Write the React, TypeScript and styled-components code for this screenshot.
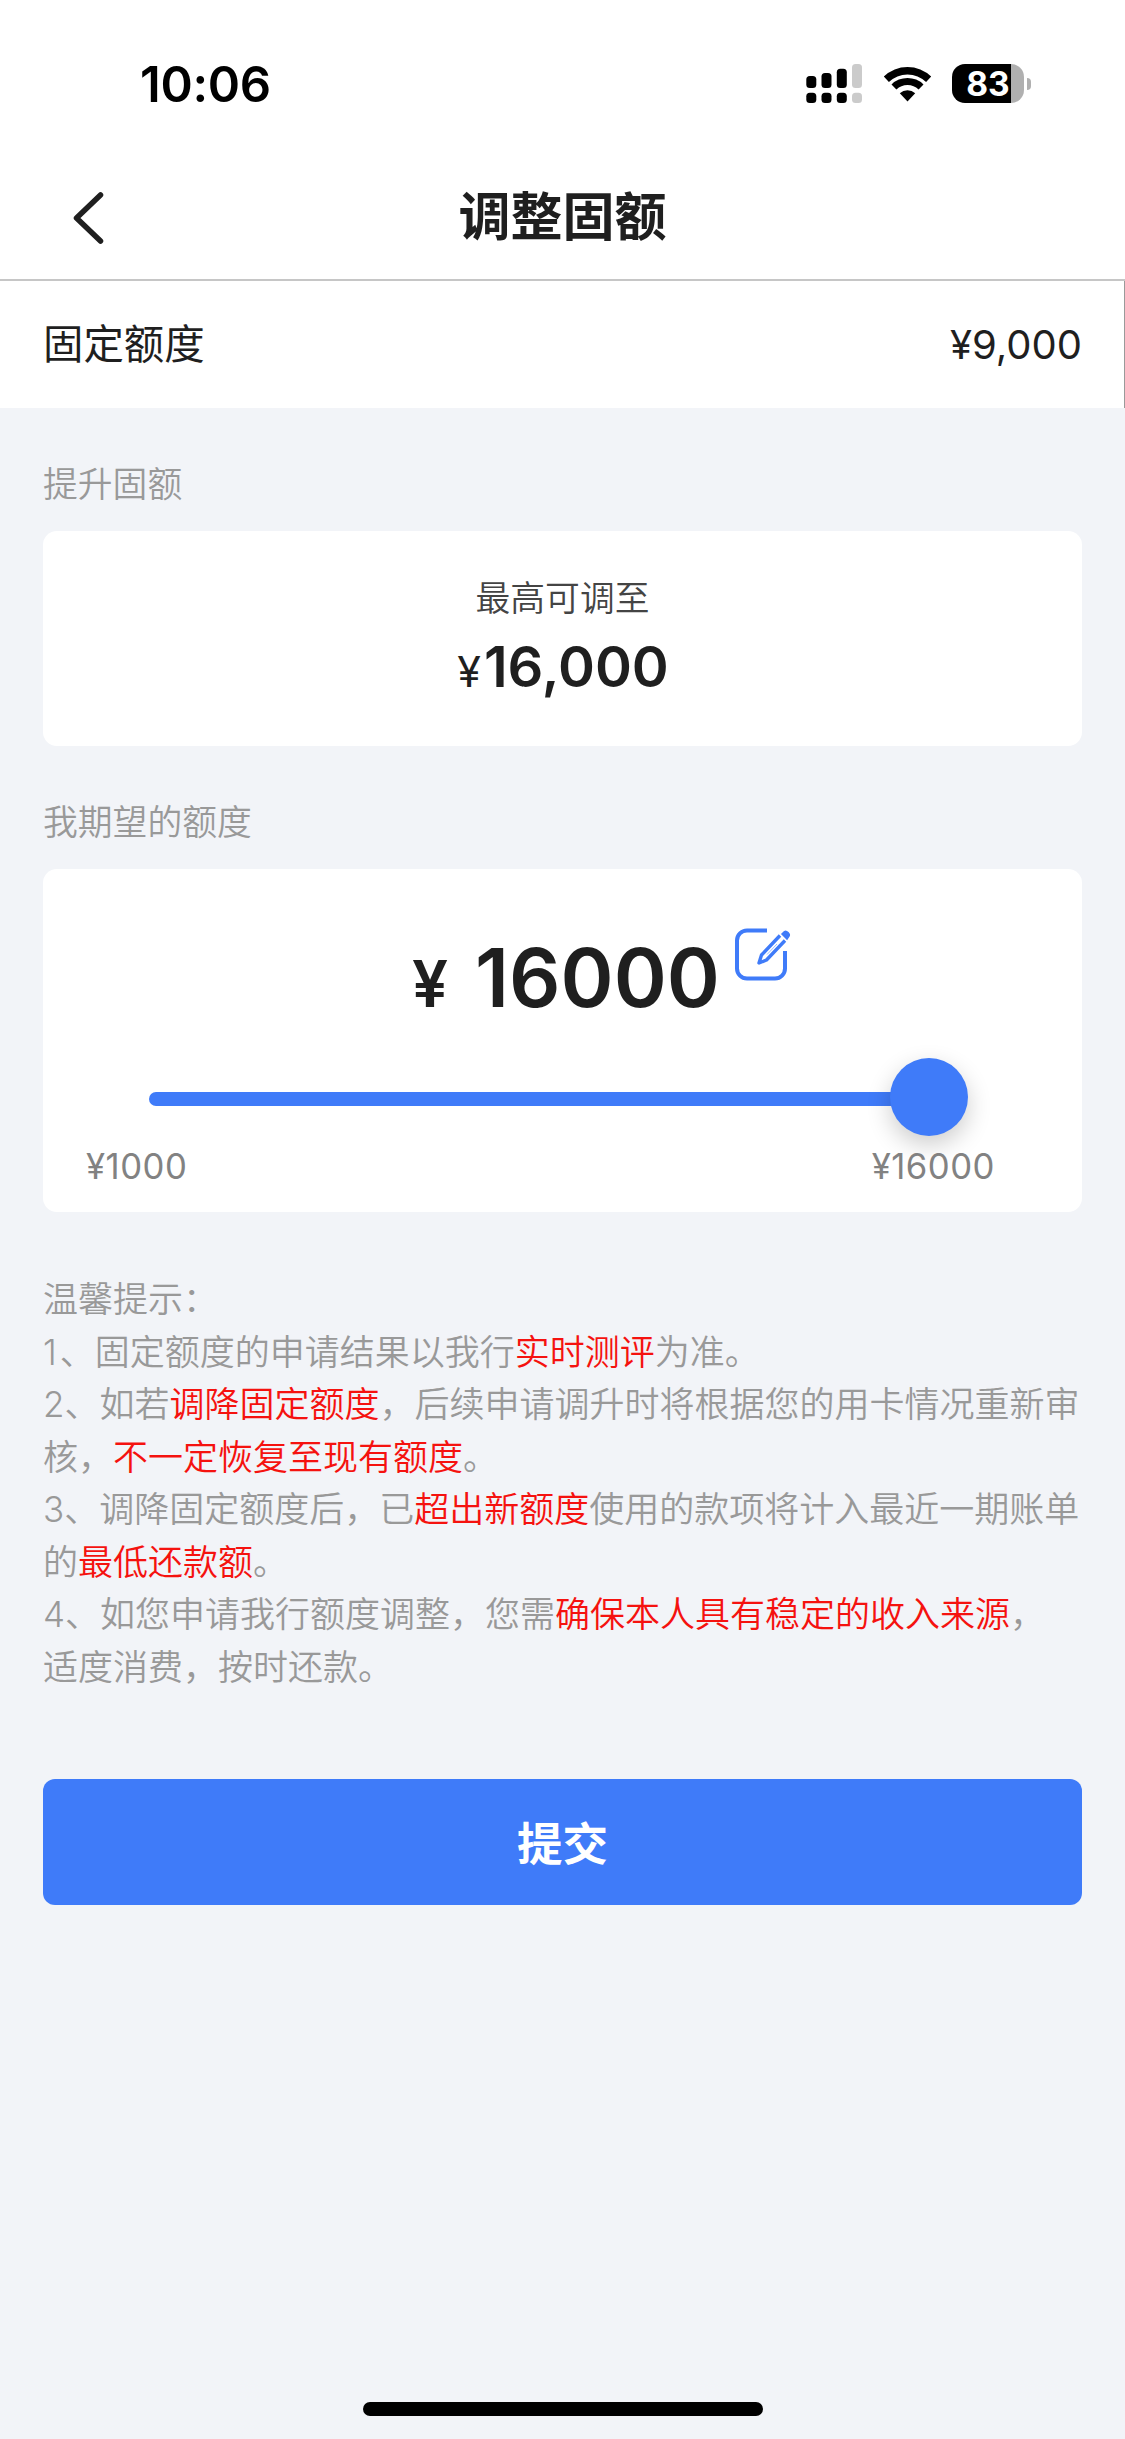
import React from 'react';
import styled, { createGlobalStyle } from 'styled-components';

const GlobalStyle = createGlobalStyle`
  body {
    margin: 0;
    background: #f2f4f8;
  }
  * {
    box-sizing: border-box;
  }
`;

const Screen = styled.div`
  width: 1125px;
  height: 2439px;
  display: flex;
  flex-direction: column;
  background: #f2f4f8;
  color: #1f1f1f;
  font-family: Inter, 'Noto Sans CJK SC', sans-serif;
  white-space: nowrap;
  overflow: hidden;
`;

const StatusBar = styled.div`
  height: 168px;
  padding: 0 94px 0 140px;
  display: flex;
  justify-content: space-between;
  align-items: center;
  background: #fff;
  color: #000;
`;

const Clock = styled.div`
  padding-top: 1px;
  font-size: 49px;
  font-weight: 600;
  line-height: 60px;
  letter-spacing: -0.3px;
`;

const StatusIcons = styled.div`
  display: flex;
  align-items: center;
  gap: 20px;
`;

const Battery = styled.div`
  display: flex;
  align-items: center;
  gap: 3px;
  padding-bottom: 1px;
`;

const BatteryBody = styled.div`
  width: 72px;
  height: 39px;
  border-radius: 13px;
  background: linear-gradient(to right, #000 59px, #b0b0b0 59px);
  color: #fff;
  font-size: 33.5px;
  font-weight: 700;
  line-height: 41px;
  text-align: center;
`;

const BatteryCap = styled.div`
  width: 4px;
  height: 12px;
  border-radius: 0 4px 4px 0;
  background: #b0b0b0;
`;

const NavBar = styled.header`
  height: 113px;
  padding: 0 72px 12px;
  display: grid;
  grid-template-columns: 60px 1fr 60px;
  align-items: center;
  background: #fff;
  border-bottom: 2px solid #c6c6c6;
`;

const BackButton = styled.button`
  padding: 0;
  border: 0;
  background: none;
  display: flex;
`;

const Title = styled.h1`
  margin: 0;
  font-size: 52px;
  font-weight: 600;
  line-height: 70px;
  text-align: center;
`;

const CurrentLimit = styled.div`
  height: 127px;
  padding: 0 42px 0 43px;
  display: flex;
  justify-content: space-between;
  align-items: center;
  background: #fff;
  border-right: 1px solid #9a9a9a;
  font-size: 40px;
`;

const LimitName = styled.span`
  padding-bottom: 6px;
  font-size: 40.4px;
`;

const Content = styled.main`
  flex: 1;
  padding: 0 43px;
  display: flex;
  flex-direction: column;
`;

const SectionLabel = styled.div`
  margin-top: 50px;
  height: 52px;
  font-size: 34.8px;
  font-weight: 350;
  line-height: 52px;
  color: #999;
`;

const Card = styled.section<{ $height: number }>`
  margin-top: 21px;
  height: ${(p) => p.$height}px;
  border-radius: 14px;
  background: #fff;
  display: flex;
  flex-direction: column;
`;

const MaxCaption = styled.div`
  margin-top: 41px;
  font-size: 34.8px;
  font-weight: 350;
  line-height: 52px;
  text-align: center;
  color: #444;
`;

const MaxAmount = styled.div`
  margin-top: 8px;
  padding-left: 1px;
  font-size: 56px;
  font-weight: 600;
  line-height: 70px;
  text-align: center;
`;

const SmallYen = styled.span`
  margin-right: 3px;
  font-size: 43px;
  font-weight: 400;
`;

const AmountRow = styled.div`
  margin-top: 59px;
  height: 100px;
  padding-left: 369px;
  display: flex;
  align-items: baseline;
  font-size: 80.5px;
  font-weight: 600;
  line-height: 100px;
`;

const AmountYen = styled.span`
  width: 63px;
  font-size: 64px;
`;

const EditButton = styled.button`
  align-self: flex-start;
  margin: -6px 0 0 10px;
  padding: 0;
  border: 0;
  background: none;
  display: flex;
`;

const Slider = styled.div`
  margin: 30px 114px 0 106px;
  height: 78px;
  display: flex;
  align-items: center;
`;

const Track = styled.div`
  flex: 1;
  height: 14px;
  margin-top: 3px;
  border-radius: 7px 0 0 7px;
  background: #3f7bf9;
`;

const Knob = styled.div`
  width: 78px;
  height: 78px;
  margin-left: -2px;
  border-radius: 50%;
  background: #3f7bf9;
  box-shadow: 0 9px 24px rgba(0, 0, 0, 0.2);
`;

const Range = styled.div`
  margin: 8px 87px 0 43px;
  display: flex;
  justify-content: space-between;
  font-size: 34.7px;
  line-height: 44px;
  letter-spacing: 0.5px;
  color: #828282;
`;

const Tips = styled.div`
  margin-top: 61px;
  font-size: 35px;
  font-weight: 350;
  line-height: 52.5px;
  color: #999;
`;

const TipLine = styled.div`
  height: 52.5px;
`;

const TipNumber = styled.span`
  display: inline-block;
  min-width: 16.8px;
`;

const Red = styled.span`
  color: #f5120f;
`;

const Submit = styled.button`
  margin-top: 86px;
  height: 126px;
  padding: 0 0 3px;
  border: 0;
  border-radius: 12px;
  background: #3f7bf9;
  color: #fff;
  font-family: inherit;
  font-size: 45.5px;
  font-weight: 600;
`;

const HomeIndicator = styled.div`
  width: 400px;
  height: 14px;
  margin: auto auto 23px;
  border-radius: 7px;
  background: #000;
`;

const SignalIcon = () => (
  <svg width="57" height="40" viewBox="0 0 57 40">
    <rect x="0.3" y="12" width="10" height="12" rx="3.5" />
    <rect x="15.5" y="9" width="10" height="15" rx="3.5" />
    <rect x="30.8" y="4.7" width="10" height="19.3" rx="3.5" />
    <rect x="46" y="0" width="10" height="24" rx="3.5" fill="#cbcbcb" />
    <rect x="0.3" y="28.7" width="10" height="10.3" rx="3.5" />
    <rect x="15.5" y="28.7" width="10" height="10.3" rx="3.5" />
    <rect x="30.8" y="28.7" width="10" height="10.3" rx="3.5" />
    <rect x="46" y="28.7" width="10" height="10.3" rx="3.5" fill="#cbcbcb" />
  </svg>
);

const WifiIcon = () => (
  <svg width="49" height="36" viewBox="0 0 49 36">
    <path d="M0.8 10.6a34 34 0 0 1 47.4 0L43.1 16a26.7 26.7 0 0 0-37.2 0z" />
    <path d="M8.5 18.4a23 23 0 0 1 32 0L35.6 23.6a15.9 15.9 0 0 0-22.2 0z" />
    <path d="M16.8 27.2a11.2 11.2 0 0 1 15.4 0L24.5 35.4z" />
  </svg>
);

const BackIcon = () => (
  <svg width="34" height="54" viewBox="0 0 34 54" fill="none">
    <path
      d="M28.5 4L4.5 27L28.5 50"
      stroke="#1f1f1f"
      strokeWidth="5.5"
      strokeLinecap="round"
      strokeLinejoin="round"
    />
  </svg>
);

const EditIcon = () => (
  <svg width="66" height="64" viewBox="0 0 66 64" fill="none" stroke="#3f7bf9">
    <path
      d="M37 8.5H17a10 10 0 0 0-10 10V46.5a10 10 0 0 0 10 10H45a10 10 0 0 0 10-10V29"
      strokeWidth="4"
    />
    <path d="M50 13.5L31.5 33L29 41L36.500 38L55 18.500" strokeWidth="3.4" strokeLinejoin="round" />
    <path d="M37 32.500L47 22" strokeWidth="1" opacity="0.5" />
    <path d="M52 12l2.500-2.500q1.500-1 3.500 1t1 3.500l-2 3z" fill="#3f7bf9" strokeWidth="1.500" />
  </svg>
);

export default function App() {
  return (
    <>
      <GlobalStyle />
      <Screen lang="zh-CN">
        <StatusBar>
          <Clock>10:06</Clock>
          <StatusIcons>
            <SignalIcon />
            <WifiIcon />
            <Battery>
              <BatteryBody>83</BatteryBody>
              <BatteryCap />
            </Battery>
          </StatusIcons>
        </StatusBar>
        <NavBar>
          <BackButton aria-label="返回">
            <BackIcon />
          </BackButton>
          <Title>调整固额</Title>
        </NavBar>
        <CurrentLimit>
          <LimitName>固定额度</LimitName>
          <span>¥9,000</span>
        </CurrentLimit>
        <Content>
          <SectionLabel>提升固额</SectionLabel>
          <Card $height={215}>
            <MaxCaption>最高可调至</MaxCaption>
            <MaxAmount>
              <SmallYen>¥</SmallYen>16,000
            </MaxAmount>
          </Card>
          <SectionLabel>我期望的额度</SectionLabel>
          <Card $height={343}>
            <AmountRow>
              <AmountYen>¥</AmountYen>
              <span>16000</span>
              <EditButton aria-label="编辑">
                <EditIcon />
              </EditButton>
            </AmountRow>
            <Slider>
              <Track />
              <Knob />
            </Slider>
            <Range>
              <span>¥1000</span>
              <span>¥16000</span>
            </Range>
          </Card>
          <Tips>
            <TipLine>温馨提示：</TipLine>
            <TipLine>
              <TipNumber>1</TipNumber>、固定额度的申请结果以我行<Red>实时测评</Red>为准。
            </TipLine>
            <TipLine>
              <TipNumber>2</TipNumber>、如若<Red>调降固定额度</Red>，后续申请调升时将根据您的用卡情况重新审
            </TipLine>
            <TipLine>
              核，<Red>不一定恢复至现有额度</Red>。
            </TipLine>
            <TipLine>
              <TipNumber>3</TipNumber>、调降固定额度后，已<Red>超出新额度</Red>使用的款项将计入最近一期账单
            </TipLine>
            <TipLine>
              的<Red>最低还款额</Red>。
            </TipLine>
            <TipLine>
              <TipNumber>4</TipNumber>、如您申请我行额度调整，您需<Red>确保本人具有稳定的收入来源</Red>，
            </TipLine>
            <TipLine>适度消费，按时还款。</TipLine>
          </Tips>
          <Submit>提交</Submit>
          <HomeIndicator />
        </Content>
      </Screen>
    </>
  );
}
